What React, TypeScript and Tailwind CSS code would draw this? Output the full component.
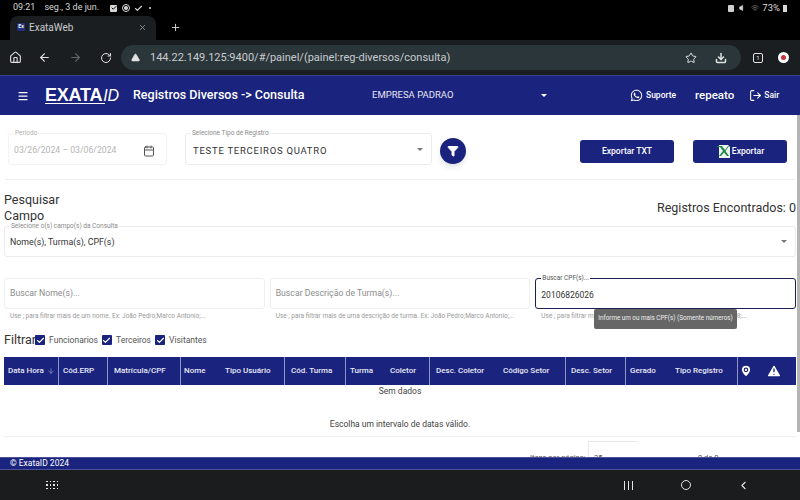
import React from "react";
import {
  AlertTriangle,
  ArrowDown,
  ArrowLeft,
  ArrowRight,
  Calendar,
  Check,
  ChevronLeft,
  Download,
  Filter,
  Home,
  LogOut,
  MapPin,
  Menu,
  Plus,
  RotateCw,
  Star,
  Volume,
  Wifi,
  X,
} from "lucide-react";
import { FaWhatsapp } from "react-icons/fa";

const columns = [
  { label: "Data Hora", w: "w-[54px]", line: false, pl: "pl-[4px]" },
  { label: "Cód.ERP", w: "w-[49px]", line: true, pl: "pl-[4px]" },
  { label: "Matrícula/CPF", w: "w-[73px]", line: true, pl: "pl-[6px]" },
  { label: "Nome", w: "w-[41px]", line: true, pl: "pl-[3px]" },
  { label: "Tipo Usuário", w: "w-[63px]", line: false, pl: "pl-[4px]" },
  { label: "Cód. Turma", w: "w-[61px]", line: true, pl: "pl-[6px]" },
  { label: "Turma", w: "w-[41px]", line: true, pl: "pl-[4px]" },
  { label: "Coletor", w: "w-[43px]", line: false, pl: "pl-[4px]" },
  { label: "Desc. Coletor", w: "w-[69px]", line: true, pl: "pl-[6px]" },
  { label: "Código Setor", w: "w-[67px]", line: false, pl: "pl-[5px]" },
  { label: "Desc. Setor", w: "w-[60px]", line: true, pl: "pl-[5px]" },
  { label: "Gerado", w: "w-[45px]", line: true, pl: "pl-[4px]" },
  { label: "Tipo Registro", w: "w-[67px]", line: false, pl: "pl-[5px]" },
];

const Legend = ({ text, color = "text-[#8a8a8a]" }: { text: string; color?: string }) => (
  <span className={`absolute -top-[5px] left-[5px] bg-white px-[1px] text-[6.5px] leading-[9px] ${color}`}>
    {text}
  </span>
);

const SearchField = ({ placeholder, hint }: { placeholder: string; hint: string }) => (
  <div className="flex flex-1 flex-col">
    <div className="flex h-[31px] items-center rounded-[3px] border border-[#f0f0f0] px-[5px] pt-[1px] text-[8.7px] text-[#8c8c8c]">
      {placeholder}
    </div>
    <div className="mt-[3px] truncate px-[6px] text-[6.5px] leading-[9px] text-[#9a9a9a]">{hint}</div>
  </div>
);

const Check1 = ({ label }: { label: string }) => (
  <div className="flex items-center gap-[4px]">
    <span className="flex h-[10px] w-[10px] items-center justify-center rounded-[1px] bg-[#1a237e]">
      <Check size={9} color="white" strokeWidth={3} />
    </span>
    <span className="text-[8.5px] text-[#555]">{label}</span>
  </div>
);

const App = () => {
  return (
    <div className="relative flex h-[500px] w-[800px] flex-col overflow-hidden bg-white font-['Roboto',sans-serif]">
      {/* status bar */}
      <div className="flex h-[16px] items-center justify-between bg-black px-[13px] text-[9px] text-[#d8d8d8]">
        <div className="flex items-center">
          <span>09:21</span>
          <span className="ml-[9px]">seg., 3 de jun.</span>
          <span className="ml-[11px] flex h-[7px] w-[7px] items-center justify-center rounded-[1px] bg-[#d8d8d8]">
            <Check size={6} color="black" strokeWidth={4} />
          </span>
          <span className="ml-[5px] h-[8px] w-[8px] rounded-full border border-[#d8d8d8] p-[1px]">
            <span className="block h-full w-full rounded-full bg-[#d8d8d8]" />
          </span>
          <Check size={9} className="ml-[4px]" strokeWidth={3} />
          <span className="ml-[6px] h-[2px] w-[2px] rounded-full bg-[#d8d8d8]" />
        </div>
        <div className="flex items-center gap-[3px]">
          <span className="h-[7px] w-[6px] rounded-[1px] bg-[#d0d0d0]" />
          <Volume size={8} className="ml-[2px]" fill="#d8d8d8" />
          <Wifi size={8} className="ml-[1px] text-[#888]" />
          <span className="text-[9.5px]">73%</span>
          <span className="h-[7px] w-[4px] bg-[#d8d8d8]" />
        </div>
      </div>

      {/* tabs */}
      <div className="flex h-[24px] items-end bg-black pl-[10px]">
        <div className="flex h-[24px] w-[146px] items-center rounded-t-[8px] bg-[#1b1e21] pb-[2px] pl-[7px] pr-[9px]">
          <span className="flex h-[8px] w-[8px] items-center justify-center rounded-[1px] bg-[#24307c] text-[5px] font-bold text-white">
            Ex
          </span>
          <span className="ml-[4px] flex-1 text-[10px] text-[#c9cccf]">ExataWeb</span>
          <X size={9} className="text-[#a0a3a6]" />
        </div>
        <Plus size={11} className="mb-[7px] ml-[14px] text-[#d8d8d8]" />
      </div>

      {/* browser toolbar */}
      <div className="flex h-[35px] items-center bg-[#1b1e21] pl-[9px]">
        <Home size={13} className="text-[#e3e3e3]" />
        <ArrowLeft size={13} className="ml-[16px] text-[#e3e3e3]" />
        <ArrowRight size={13} className="ml-[18px] text-[#62666a]" />
        <RotateCw size={12} className="ml-[18px] text-[#e3e3e3]" />
        <div className="ml-[9px] flex h-[25px] w-[620px] items-center rounded-full bg-[#2b363b] pl-[10px] pr-[14px]">
          <AlertTriangle size={9} fill="#e3e3e3" className="text-[#e3e3e3]" />
          <span className="ml-[10px] flex-1 pt-[1px] text-[11px] text-[#c9cccf]">
            144.22.149.125:9400/#/painel/(painel:reg-diversos/consulta)
          </span>
          <Star size={12} className="text-[#e3e3e3]" />
          <Download size={12} strokeWidth={3} className="ml-[18px] text-[#e3e3e3]" />
        </div>
        <span className="ml-[12px] flex h-[10px] w-[10px] items-center justify-center rounded-[2px] border border-[#e3e3e3] text-[6px] text-[#e3e3e3]">
          1
        </span>
        <span className="ml-[15px] flex h-[11px] w-[11px] items-center justify-center rounded-full bg-white">
          <span className="h-[5px] w-[5px] rounded-full bg-[#c8323a]" />
        </span>
      </div>

      {/* app header */}
      <div className="flex h-[40px] items-center border-t border-[#3a4390] bg-[#1a237e] pl-[17px] text-white">
        <Menu size={12} strokeWidth={2.5} />
        <div className="ml-[16px] flex w-[78px] shrink-0 flex-col">
          <span className="whitespace-nowrap font-['Liberation_Sans',sans-serif] text-[18px] font-bold leading-[16px] tracking-[-0.2px]">
            EXATA<span className="ml-[1px] text-[16px] font-normal italic">ID</span>
          </span>
          <span className="mt-[-1px] h-[1.5px] w-[60px] bg-white" />
        </div>
        <span className="ml-[10px] w-[239px] shrink-0 text-[12.5px] font-medium">Registros Diversos -&gt; Consulta</span>
        <span className="w-[169px] shrink-0 text-[9.5px] text-[#e6e6f2]">EMPRESA PADRAO</span>
        <span className="h-0 w-0 border-x-[3px] border-t-[3px] border-x-transparent border-t-white" />
        <FaWhatsapp size={13} className="ml-[83px]" />
        <span className="ml-[3px] text-[8.5px] font-medium">Suporte</span>
        <span className="ml-[19px] text-[11.5px] font-medium">repeato</span>
        <LogOut size={13} className="ml-[15px]" />
        <span className="ml-[2px] text-[8.5px] font-medium">Sair</span>
      </div>

      {/* content */}
      <div className="relative flex flex-1 flex-col overflow-hidden">
        <div className="absolute right-0 top-0 h-[317px] w-[3px] bg-[#b5b5b5]" />

        <div className="mx-[5px] flex h-[65px] shrink-0 items-start border-b border-[#f0f0f0] pl-[3px] pt-[18px]">
          <div className="relative flex h-[32px] w-[159px] items-center justify-between rounded-[3px] border border-[#f3f3f3] pl-[5px] pr-[11px] pt-[3px] text-[8.7px] text-[#b5b5b5]">
            <Legend text="Período" color="text-[#b0b0b0]" />
            <span>03/26/2024 – 03/06/2024</span>
            <Calendar size={12} className="text-[#555]" />
          </div>
          <div className="relative ml-[18px] flex h-[32px] w-[247px] items-center justify-between rounded-[3px] border border-[#ececec] pl-[7px] pr-[8px] pt-[4px] text-[9.5px] text-[#333]">
            <Legend text="Selecione Tipo de Registro" />
            <span className="whitespace-nowrap tracking-[0.75px]">TESTE TERCEIROS QUATRO</span>
            <span className="mb-[4px] h-0 w-0 border-x-[3px] border-t-[3px] border-x-transparent border-t-[#777]" />
          </div>
          <div className="ml-[8px] mt-[5px] flex h-[26px] w-[26px] items-center justify-center rounded-full bg-[#1a237e] shadow-md">
            <Filter size={12} fill="white" color="white" />
          </div>
          <button className="ml-[114px] mt-[7px] h-[23px] w-[94px] rounded-[3px] bg-[#1a237e] text-[8.5px] font-medium text-white">
            Exportar TXT
          </button>
          <button className="ml-[19px] mt-[7px] flex h-[23px] w-[94px] items-center justify-center rounded-[3px] bg-[#1a237e] text-[8.5px] font-medium text-white">
            <svg width="15" height="15" viewBox="0 0 15 15" className="mr-[1px]">
              <path d="M3 1h9l2 2v11H3z" fill="#eef5ef" />
              <path d="M1 2h5l3 4 3-4h1l-3.5 5L13 12h-2L8 8.5 5 12H3l4-5-3-4H1z" fill="#1f8a4c" />
            </svg>
            Exportar
          </button>
        </div>

        <div className="flex items-center justify-between px-[4px] pt-[12px] text-[12.5px] leading-[16px] text-[#333]">
          <div>
            <div>Pesquisar</div>
            <div>Campo</div>
          </div>
          <span>Registros Encontrados: 0</span>
        </div>

        <div className="relative mx-[4px] mt-[2px] flex h-[31px] shrink-0 items-center justify-between rounded-[3px] border border-[#ececec] pl-[5px] pr-[8px] pt-[3px] text-[8.8px] text-[#333]">
          <Legend text="Selecione o(s) campo(s) da Consulta" />
          <span>Nome(s), Turma(s), CPF(s)</span>
          <span className="mb-[3px] h-0 w-0 border-x-[3px] border-t-[3px] border-x-transparent border-t-[#777]" />
        </div>

        <div className="mx-[4px] mt-[21px] flex gap-[5px]">
          <SearchField
            placeholder="Buscar Nome(s)..."
            hint="Use ; para filtrar mais de um nome. Ex: João Pedro;Marco Antonio;..."
          />
          <SearchField
            placeholder="Buscar Descrição de Turma(s)..."
            hint="Use ; para filtrar mais de uma descrição de turma. Ex: João Pedro;Marco Antonio;..."
          />
          <div className="flex flex-1 flex-col">
            <div className="relative flex h-[31px] items-center rounded-[3px] border border-[#1b2050] pl-[5px] pt-[3px] text-[8.5px] text-[#333]">
              <Legend text="Buscar CPF(s)..." color="text-[#555]" />
              20106826026
            </div>
            <div className="mt-[3px] truncate px-[6px] text-[6.5px] leading-[9px] text-[#9a9a9a]">
              Use ; para filtrar mais de um CPF. Ex: 111.111.111-11;222.222.229-68;...
            </div>
          </div>
        </div>

        <div className="mt-[9px] flex h-[20px] shrink-0 items-center pl-[4px]">
          <span className="mr-[-1px] text-[12.5px] text-[#333]">Filtrar</span>
          <div className="flex items-center gap-[4px]">
            <Check1 label="Funcionarios" />
            <Check1 label="Terceiros" />
            <Check1 label="Visitantes" />
          </div>
        </div>

        {/* table */}
        <div className="mx-[4px] mt-[7px] flex h-[28px] shrink-0 items-center bg-[#1a237e] text-[8px] font-medium text-[#e8e9f4]">
          {columns.map((c) => (
            <div
              key={c.label}
              className={`flex h-full shrink-0 items-center ${c.w} ${c.pl} ${c.line ? "border-l border-[#8f94c6]" : ""}`}
            >
              {c.label}
              {c.label === "Data Hora" && <ArrowDown size={8} className="ml-[3px] text-[#9a9ec9]" />}
            </div>
          ))}
          <div className="flex h-full flex-1 items-center border-l border-[#8f94c6] pl-[1px]">
            <MapPin size={14} fill="white" color="#1a237e" />
            <AlertTriangle size={16} fill="white" color="#1a237e" className="ml-[13px]" />
          </div>
        </div>
        <div className="mx-[4px] h-[52px] shrink-0 border-b border-[#f0f0f0] pt-[1px] text-center text-[8.5px] text-[#444]">
          <div className="leading-[10px]">Sem dados</div>
          <div className="mt-[23px] leading-[10px]">Escolha um intervalo de datas válido.</div>
        </div>

        {/* paginator, cut off by the footer */}
        <div className="flex h-[20px] shrink-0 overflow-hidden text-[7.5px] leading-[9px] text-[#555]">
          <span className="ml-[530px] mt-[16px] w-[58px]">Itens por página:</span>
          <span className="mt-[4px] h-[16px] w-[50px] border-l border-t border-[#e8e8e8] pl-[5px] pt-[11px]">25</span>
          <span className="ml-[60px] mt-[16px]">0 de 0</span>
        </div>
      </div>

      {/* footer */}
      <div className="flex h-[13px] items-center border-y border-[#4a5199] bg-[#1a237e] pl-[10px] text-[8.5px] text-white">
        © ExataID 2024
      </div>

      {/* android navigation */}
      <div className="flex h-[30px] items-center bg-[#1a1c1e] text-[#e3e3e3]">
        <div className="ml-[46px] grid grid-cols-4 gap-[2px]">
          {Array.from({ length: 12 }).map((_, i) => (
            <span key={i} className="h-[1.5px] w-[1.5px] bg-[#e3e3e3]" />
          ))}
        </div>
        <div className="ml-[566px] flex gap-[3px]">
          <span className="h-[9px] w-[1px] bg-[#e3e3e3]" />
          <span className="h-[9px] w-[1px] bg-[#e3e3e3]" />
          <span className="h-[9px] w-[1px] bg-[#e3e3e3]" />
        </div>
        <span className="ml-[48px] h-[10px] w-[10px] rounded-full border border-[#e3e3e3]" />
        <ChevronLeft size={13} className="ml-[46px]" />
      </div>

      {/* tooltip */}
      <div className="absolute left-[594px] top-[309px] flex h-[20px] w-[143px] items-center justify-center rounded-[2px] bg-[#666] text-[6.3px] text-[#eee]">
        Informe um ou mais CPF(s) (Somente números)
      </div>
    </div>
  );
};

export default App;
